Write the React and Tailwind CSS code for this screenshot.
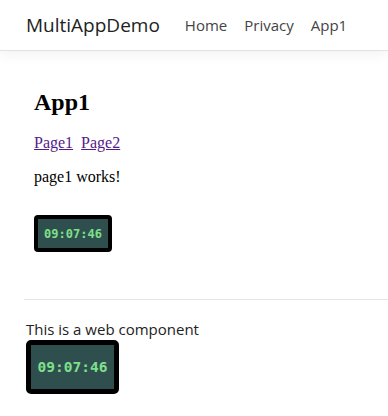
const sans = { fontFamily: '"Open Sans", "Noto Sans", sans-serif' };

const Clock = ({ big }) => {
  // 시계 박스: 작은 것 / 큰 것
  if (big) {
    return (
      <div className="inline-flex items-center justify-center w-[93px] h-[54px] rounded-[5px] border-[5px] border-black bg-[#2f4f4f]">
        <span className="text-[14.5px] leading-none font-bold text-[#7ee08a] [font-family:'DejaVu_Sans_Mono',monospace]">
          09:07:46
        </span>
      </div>
    );
  }
  return (
    <div className="inline-flex items-center justify-center w-[78px] h-[37px] rounded-[4px] border-4 border-black bg-[#2f4f4f]">
      <span className="text-[12px] leading-none font-bold text-[#7ee08a] [font-family:'DejaVu_Sans_Mono',monospace]">
        09:07:46
      </span>
    </div>
  );
};

export default function App() {
  return (
    <div className="w-[388px] h-[416px] bg-white overflow-hidden">
      {/* 상단 네비게이션 */}
      <header
        className="h-[51px] flex items-center border-b border-[#e2e2e2] shadow-[0_4px_12px_rgba(0,0,0,0.05)] pl-[26px]"
        style={sans}
      >
        <span className="text-[19px] text-[#222] mr-[25px]">MultiAppDemo</span>
        <nav className="flex gap-[17px] text-[15px] text-[#444]">
          <a>Home</a>
          <a>Privacy</a>
          <a>App1</a>
        </nav>
      </header>

      {/* 본문 */}
      <main className="pt-[37px] pl-[34px] [font-family:'Liberation_Serif',serif] text-black">
        <h2 className="text-[24px] leading-[28px] font-bold">App1</h2>
        <div className="mt-[18px] flex gap-[8px] text-[16px] leading-[18px]">
          <a className="underline text-[#551a8b]">Page1</a>
          <a className="underline text-[#551a8b]">Page2</a>
        </div>
        <p className="mt-[16px] text-[16px] leading-[18px]">page1 works!</p>
        <div className="mt-[29px] flex">
          <Clock />
        </div>
      </main>

      <div className="ml-[24px] mt-[47px] border-t border-[#e5e5e5]" />

      <section className="pl-[26px] pt-[18px]" style={sans}>
        <p className="text-[15px] leading-[22px] text-[#222]">This is a web component</p>
        <div className="flex">
          <Clock big />
        </div>
      </section>
    </div>
  );
}
